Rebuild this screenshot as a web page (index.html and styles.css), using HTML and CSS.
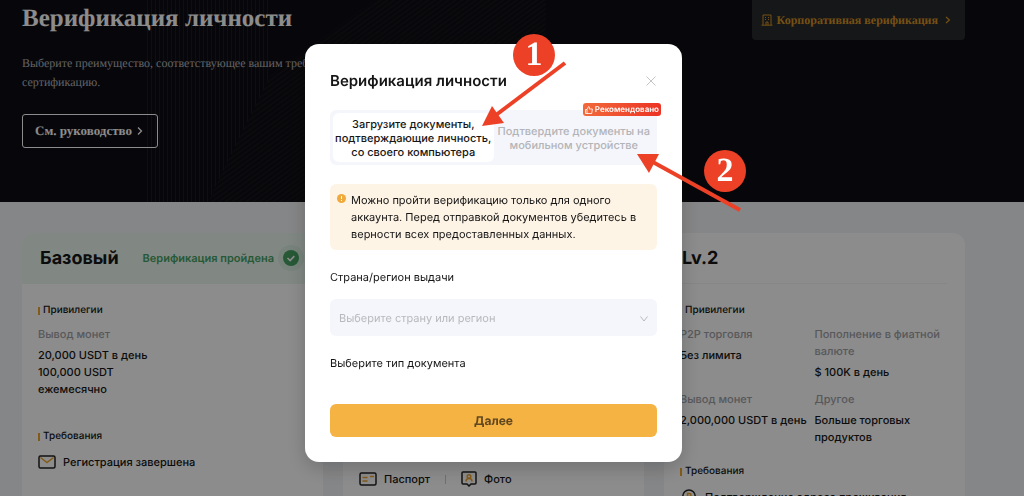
FILE: index.html
```html
<!DOCTYPE html>
<html lang="ru">
<head>
    <meta charset="UTF-8">
    <meta name="viewport" content="width=device-width, initial-scale=1.0">
    <title>Верификация личности</title>
    <link rel="stylesheet" href="styles.css">
</head>
<body>
    <header class="hero">
        <svg class="hero-lines" width="400" height="202" viewBox="0 0 400 202" aria-hidden="true">
            <defs>
                <pattern id="vert" width="4" height="4" patternUnits="userSpaceOnUse">
                    <path d="M1.500 0v4" stroke="#1d1d20"/>
                </pattern>
                <pattern id="diag" width="4" height="4" patternUnits="userSpaceOnUse" patternTransform="rotate(-36)">
                    <path d="M0 2h4" stroke="#19191c"/>
                </pattern>
            </defs>
            <path d="M0 0H124V76L62 202H0z" fill="url(#vert)"/>
            <path d="M124 76L229 0H400V202H62z" fill="url(#diag)"/>
        </svg>
        <div class="hero-text">
            <h1>Верификация личности</h1>
            <p>Выберите преимущество, соответствующее вашим требованиям,<br>сертификацию.</p>
            <button class="guide-btn">См. руководство
                <svg width="6" height="10" viewBox="0 0 6 10"><path d="M1 1.500L4.500 5 1 8.500" fill="none" stroke="currentColor" stroke-width="1.3"/></svg>
            </button>
        </div>
        <a class="corporate" href="#">
            <svg width="12" height="12" viewBox="0 0 12 12" fill="none" stroke="currentColor"><path d="M2 11V1h8v10M0.5 11.2h11M4 3.5h1M7 3.5h1M4 5.5h1M7 5.5h1M5 11V8h2v3"/></svg>
            Корпоративная верификация
            <svg class="arrow" width="6" height="8" viewBox="0 0 6 8"><path d="M1 1l3.400 3L1 7" fill="none" stroke="currentColor" stroke-width="1.2"/></svg>
        </a>
    </header>

    <main class="cards">
        <section class="card">
            <div class="card-head done">
                <h2>Базовый</h2>
                <span class="status">Верификация пройдена</span>
                <svg class="check" width="26" height="26" viewBox="0 0 26 26"><circle cx="13" cy="13" r="13" fill="#d9efe1"/><circle cx="13" cy="13" r="8" fill="#47a263"/><path d="M9.500 13l2.600 2.500 4.200-4.400" fill="none" stroke="#fff" stroke-width="1.6"/></svg>
            </div>
            <div class="card-body">
                <h3>Привилегии</h3>
                <dl>
                    <div>
                        <dt>Вывод монет</dt>
                        <dd>20,000 USDT в день<br>100,000 USDT<br>ежемесячно</dd>
                    </div>
                </dl>
                <h3 class="second">Требования</h3>
                <div class="needs">
                    <svg width="18" height="14" viewBox="0 0 18 14" fill="none" stroke-width="1.5"><rect x="1" y="1" width="16" height="12" rx="1.5" stroke="#222"/><path d="M2.500 2.500L9 7.500l6.500-5" stroke="#f0a52c"/></svg>
                    Регистрация завершена
                </div>
            </div>
        </section>

        <section class="card middle">
            <div class="needs">
                <svg width="18" height="14" viewBox="0 0 18 14" fill="none" stroke-width="1.5"><rect x="1" y="1" width="16" height="12" rx="1.5" stroke="#222"/><path d="M3.500 5.500h5M3.500 9h5M11 4.500h4" stroke="#f0a52c"/></svg>
                Паспорт
                <i></i>
                <svg width="16" height="16" viewBox="0 0 16 16" fill="none" stroke-width="1.5"><path d="M2 1h12q1 0 1 1v10q0 1-1 1h-4l-2 2-2-2H2q-1 0-1-1V2q0-1 1-1z" stroke="#222"/><circle cx="8" cy="5.500" r="1.800" stroke="#f0a52c"/><path d="M5 10.500q0-3 3-3t3 3" stroke="#f0a52c"/></svg>
                Фото
            </div>
        </section>

        <section class="card">
            <div class="card-head">
                <h2>Lv.2</h2>
            </div>
            <div class="card-body">
                <h3>Привилегии</h3>
                <dl>
                    <div>
                        <dt>P2P торговля</dt>
                        <dd>Без лимита</dd>
                    </div>
                    <div>
                        <dt>Пополнение в фиатной валюте</dt>
                        <dd>$ 100K в день</dd>
                    </div>
                    <div>
                        <dt>Вывод монет</dt>
                        <dd>2,000,000 USDT в день</dd>
                    </div>
                    <div>
                        <dt>Другое</dt>
                        <dd>Больше торговых продуктов</dd>
                    </div>
                </dl>
                <h3 class="second">Требования</h3>
                <div class="needs">
                    <svg width="18" height="18" viewBox="0 0 18 18" fill="none" stroke-width="1.5"><path d="M9 17L4.500 12.500a6.200 6.200 0 1 1 9 0z" stroke="#222"/><path d="M7.500 11V5.500h2q1.500 0 1.500 1.500t-1.500 1.500h-2" stroke="#f0a52c"/></svg>
                    Подтверждение адреса проживания
                </div>
            </div>
        </section>
    </main>

    <div class="overlay">
        <div class="modal" role="dialog" aria-labelledby="modal-title">
            <div class="modal-head">
                <h2 id="modal-title">Верификация личности</h2>
                <button class="close" aria-label="Закрыть">
                    <svg width="10" height="10" viewBox="0 0 10 10"><path d="M.5.5l9 9M9.500.5l-9 9" stroke="#c4c4c6"/></svg>
                </button>
            </div>

            <div class="tabs">
                <button class="tab active">Загрузите документы, подтверждающие личность, со своего компьютера</button>
                <button class="tab">Подтвердите документы на мобильном устройстве</button>
                <span class="recommended">
                    <svg width="8" height="8" viewBox="0 0 8 8" fill="none" stroke="#fff" stroke-width=".8"><path d="M.5 3.500h1.500v4H.5zM2 3.500L3.500.6q1.200 0 1 1.200L4.200 3h3.200L6.700 7.500H2"/></svg>
                    Рекомендовано
                </span>
            </div>

            <div class="notice">
                <svg width="9" height="9" viewBox="0 0 9 9"><circle cx="4.500" cy="4.500" r="4.500" fill="#f0a93c"/><path d="M4.500 2v3M4.500 6v1" stroke="#fff"/></svg>
                <p>Можно пройти верификацию только для одного аккаунта. Перед отправкой документов убедитесь в верности всех предоставленных данных.</p>
            </div>

            <label for="country">Страна/регион выдачи</label>
            <div class="select">
                <select id="country">
                    <option>Выберите страну или регион</option>
                </select>
                <svg width="8" height="6" viewBox="0 0 8 6"><path d="M.5 .5L4 5 7.500.5" fill="none" stroke="#b8b9bd"/></svg>
            </div>

            <p class="doc-type">Выберите тип документа</p>
            <button class="next">Далее</button>
        </div>
    </div>

    <!-- numbered steps -->
    <svg class="arrows" width="270" height="180" viewBox="0 0 270 180" fill="#ec4127" stroke="#ec4127" aria-hidden="true">
        <path d="M84 29L15 81" stroke-width="4"/>
        <path d="M1 92L11 72 23 89z" stroke="none"/>
        <path d="M259 176L170 127" stroke-width="4"/>
        <path d="M156 120h22l-10 19z" stroke="none"/>
    </svg>
    <span class="step one">1</span>
    <span class="step two">2</span>
</body>
</html>
```

FILE: styles.css
```css
* {
    box-sizing: border-box;
}

body {
    display: flex;
    flex-direction: column;
    height: 100vh;
    margin: 0;
    background-color: #f3f4f6;
    color: #161616;
    font-family: Inter, "Liberation Sans", sans-serif;
    font-size: 11px;
    line-height: 17px;
    text-rendering: geometricPrecision;
    overflow: hidden;
}

h1, h2, h3, p, dl, dd {
    margin: 0;
}

button {
    font-family: inherit;
    text-rendering: inherit;
    cursor: pointer;
}

.hero {
    position: relative;
    display: flex;
    flex: none;
    justify-content: space-between;
    align-items: flex-start;
    height: 202px;
    padding: 0 59px 0 22px;
    background-color: #0e0e15;
    color: #fff;
    font-family: "Liberation Serif", serif;
}

.hero-lines {
    position: absolute;
    left: 146px;
    top: 0;
}

.hero-text {
    position: relative;
    padding-top: 4px;
}

.hero h1 {
    font-size: 25px;
    line-height: 30px;
}

.hero p {
    margin: 20px 0 22px;
    font-size: 12px;
    line-height: 19px;
    color: #b4b4b8;
}

.guide-btn {
    display: flex;
    align-items: center;
    gap: 5px;
    height: 34px;
    padding: 0 14px 0 12px;
    border: 1px solid #fff;
    border-radius: 3px;
    background: none;
    color: #fff;
    font-size: 13px;
    font-weight: bold;
}

.corporate {
    display: flex;
    align-items: center;
    gap: 4px;
    height: 40px;
    padding: 0 14px 0 9px;
    border-radius: 0 0 4px 4px;
    background-color: #292a2c;
    color: #d59326;
    font-size: 12px;
    font-weight: bold;
    text-decoration: none;
}

.corporate .arrow {
    margin-left: 3px;
}

.cards {
    display: grid;
    flex: 1;
    grid-template-columns: repeat(3, 1fr);
    grid-template-rows: 100%;
    gap: 20px;
    min-height: 0;
    padding: 31px 59px 0 22px;
}

.card {
    border-radius: 12px 12px 0 0;
    background-color: #fff;
    overflow: hidden;
}

.card-head {
    display: flex;
    align-items: center;
    height: 51px;
    margin: 0 18px;
    border-bottom: 1px solid #f3f4f6;
}

.card-head.done {
    margin: 0;
    padding: 0 19px 0 18px;
    background-color: #ebf8f0;
    border-color: #ebf8f0;
}

.card-head h2 {
    font-size: 18px;
    font-weight: 700;
}

.status {
    margin: 0 4px 0 auto;
    color: #47a263;
    font-weight: 600;
}

.card-body {
    padding: 18px 16px;
}

.card h3 {
    display: flex;
    align-items: center;
    gap: 3px;
    font-size: 10px;
    font-weight: 500;
}

.card h3::before {
    content: "";
    width: 2px;
    height: 8px;
    background-color: #f0a52c;
}

.card dl {
    display: grid;
    grid-template-columns: 1fr 1fr;
    align-content: start;
    gap: 10px 0;
    min-height: 85px;
    margin-top: 7px;
    font-weight: 500;
}

.card dt {
    margin-bottom: 4px;
    color: #a0a1a6;
}

.card .second {
    margin: 17px 0 8px;
}

.needs {
    display: flex;
    align-items: center;
    gap: 7px;
    min-height: 18px;
    font-weight: 500;
}

.needs i {
    width: 1px;
    height: 9px;
    margin: 0 8px;
    background-color: #ccc;
}

.middle {
    padding: 237px 16px 0;
}

.overlay {
    position: fixed;
    inset: 0;
    display: flex;
    justify-content: center;
    align-items: flex-start;
    padding: 44px 37px 0 0;
    background-color: rgba(0, 0, 0, 0.45);
}

.modal {
    width: 377px;
    padding: 26px 25px 25px;
    border-radius: 14px;
    background-color: #fff;
    box-shadow: 0 6px 20px rgba(0, 0, 0, 0.2);
}

.modal-head {
    display: flex;
    justify-content: space-between;
    align-items: center;
}

.modal-head h2 {
    font-size: 15px;
    font-weight: 600;
    line-height: 22px;
}

.close {
    display: flex;
    padding: 1px;
    border: 0;
    background: none;
}

.tabs {
    position: relative;
    display: grid;
    grid-template-columns: 1fr 1fr;
    margin-top: 18px;
    padding: 3px;
    border-radius: 6px;
    background-color: #f5f6fb;
}

.tab {
    height: 49px;
    padding: 0;
    border: 0;
    border-radius: 6px;
    background: none;
    color: #b3b4b8;
    font-size: 11px;
    font-weight: 500;
    line-height: 14px;
}

.tab.active {
    background-color: #fff;
    color: #161616;
}

.recommended {
    position: absolute;
    right: -4px;
    top: -7px;
    display: flex;
    align-items: center;
    gap: 2px;
    height: 13px;
    padding: 0 2px;
    border-radius: 3px;
    background: linear-gradient(90deg, #f2693a, #ec3324);
    color: #fff;
    font-size: 8px;
    font-weight: 600;
}

.notice {
    display: flex;
    gap: 5px;
    margin-top: 19px;
    padding: 8px 7px 7px;
    border-radius: 6px;
    background-color: #fef4e6;
}

.notice svg {
    flex: none;
    margin-top: 2px;
}

.modal label,
.doc-type {
    display: block;
    margin-top: 19px;
}

.select {
    position: relative;
    margin-top: 13px;
}

.select select {
    display: block;
    width: 100%;
    height: 37px;
    padding: 1px 9px 0;
    border: 0;
    border-radius: 6px;
    background-color: #f5f6fb;
    color: #b8b9bd;
    font: inherit;
    text-rendering: inherit;
    appearance: none;
}

.select svg {
    position: absolute;
    right: 9px;
    top: 17px;
}

.next {
    display: block;
    width: 100%;
    height: 33px;
    margin-top: 32px;
    border: 0;
    border-radius: 6px;
    background-color: #f5b344;
    color: #624820;
    font-size: 12px;
    font-weight: 700;
}

.arrows {
    position: absolute;
    left: 481px;
    top: 34px;
}

.step {
    position: absolute;
    width: 42px;
    height: 42px;
    border-radius: 50%;
    background-color: #ec4127;
    color: #fff;
    font: bold 34px/42px "Liberation Serif", serif;
    text-align: center;
}

.one {
    left: 513px;
    top: 34px;
}

.two {
    left: 704px;
    top: 150px;
}
```
